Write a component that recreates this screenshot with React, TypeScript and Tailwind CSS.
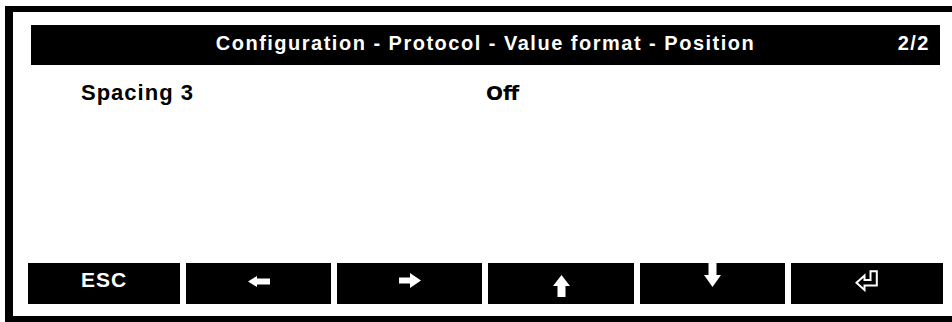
const keyIcon = "h-[41px] bg-black text-white flex justify-center items-start";

const ArrowLeft = () => (
	<svg width="22" height="11" viewBox="0 0 22 11" className="mt-[13px]">
		<polygon points="0,5.5 9,0 9,2.5 22,2.5 22,8.5 9,8.5 9,11" fill="white" />
	</svg>
);

const ArrowRight = () => (
	<svg width="22" height="15" viewBox="0 0 22 15" className="mt-[10px]">
		<polygon points="0,4.5 11,4.5 11,0 22,7.5 11,15 11,10.5 0,10.5" fill="white" />
	</svg>
);

const ArrowUp = () => (
	<svg width="17" height="22" viewBox="0 0 17 22" className="mt-[12px]">
		<polygon points="8.5,0 17,11 12.5,11 12.5,22 4.5,22 4.5,11 0,11" fill="white" />
	</svg>
);

const ArrowDown = () => (
	<svg width="17" height="24" viewBox="0 0 17 24" className="mt-0">
		<polygon points="4.5,0 12.5,0 12.5,12 17,12 8.5,24 0,12 4.5,12" fill="white" />
	</svg>
);

const EnterKey = () => (
	<svg width="24" height="22" viewBox="0 0 24 22" className="mt-[7px]">
		<polygon
			points="15.5,1.2 21.8,1.2 21.8,15.5 9.5,15.5 9.5,20 1.5,12.8 9.5,5.5 9.5,10 15.5,10"
			fill="none"
			stroke="white"
			strokeWidth="2"
			strokeLinejoin="miter"
		/>
	</svg>
);

export default function App() {
	return (
		<div className="h-[322px] w-[952px] overflow-hidden bg-white pl-[5px] pt-[6px] font-['Liberation_Sans',Arial,sans-serif] font-bold">
			<div className="flex h-[316px] flex-col border-b-[6px] border-l-[8px] border-t-[6px] border-black">
				<header className="ml-[18px] mt-[13px] grid h-[40px] w-[909px] items-center bg-black pb-[5px] text-[20px] text-white">
					<h1 className="col-start-1 row-start-1 justify-self-center tracking-[1.5px]">
						Configuration - Protocol - Value format - Position
					</h1>
					<span className="col-start-1 row-start-1 justify-self-end pr-[10px] tracking-[1.5px]">
						2/2
					</span>
				</header>

				<div className="mt-[15px] flex items-baseline leading-[26px]">
					<span className="ml-[68px] w-[405px] text-[22px] tracking-[1px]">Spacing 3</span>
					<span className="font-['DejaVu_Sans',sans-serif] text-[20px]">Off</span>
				</div>

				<nav className="mb-[12px] ml-[15px] mt-auto grid grid-cols-[152px_145px_145px_146px_145px_152px] gap-[6px]">
					<div className="flex h-[41px] items-start justify-center bg-black pt-[5px] text-[21px] leading-[24px] tracking-[1px] text-white">
						ESC
					</div>
					<div className={keyIcon}>
						<ArrowLeft />
					</div>
					<div className={keyIcon}>
						<ArrowRight />
					</div>
					<div className={keyIcon}>
						<ArrowUp />
					</div>
					<div className={keyIcon}>
						<ArrowDown />
					</div>
					<div className={keyIcon}>
						<EnterKey />
					</div>
				</nav>
			</div>
		</div>
	);
}
